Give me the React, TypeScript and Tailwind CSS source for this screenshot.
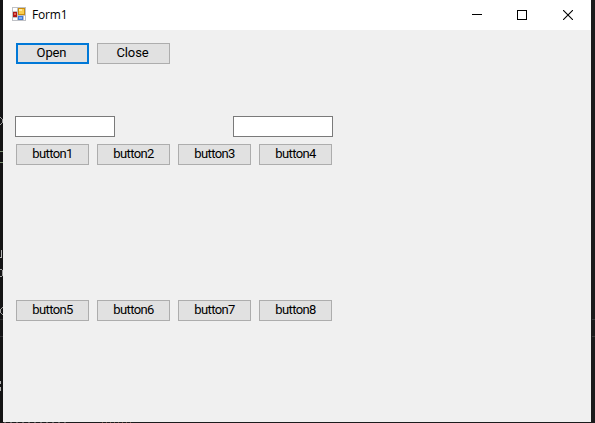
import React from "react";

function FormIcon() {
  return (
    <svg width="14" height="14" viewBox="0 0 14 14" shapeRendering="crispEdges">
      <rect x="0" y="0" width="14" height="14" fill="#bfc1c6" />
      <rect x="1" y="1" width="4" height="3" fill="#ffffff" />
      <rect x="1" y="11" width="4" height="2" fill="#ffffff" />
      <rect x="12" y="9" width="1" height="4" fill="#ffffff" />
      <rect x="1" y="5" width="4" height="5" fill="#b01818" />
      <rect x="2" y="6" width="2" height="2" fill="#e0665a" />
      <rect x="6" y="1" width="7" height="7" fill="#c98c10" />
      <rect x="7" y="2" width="5" height="5" fill="#f9cd4f" />
      <rect x="7" y="2" width="3" height="2" fill="#fee9a0" />
      <rect x="6" y="9" width="5" height="4" fill="#3f78d8" />
      <rect x="7" y="10" width="3" height="2" fill="#7fb0f5" />
    </svg>
  );
}

function TitleBar() {
  return (
    <header className="flex h-[30px] shrink-0 items-start bg-white">
      <div className="pt-[7px] pl-[9px]">
        <FormIcon />
      </div>
      <h1 className="grow pt-[7px] pl-[6px] font-['Open_Sans',sans-serif] text-[12px] leading-4 tracking-[-0.2px] text-black">
        Form1
      </h1>
      <button aria-label="Minimize" className="flex h-[29px] w-[46px] items-center justify-center pl-[2px]">
        <svg width="10" height="10" shapeRendering="crispEdges">
          <path d="M0 4.5H10" stroke="#000" />
        </svg>
      </button>
      <button aria-label="Maximize" className="flex h-[29px] w-[46px] items-center justify-center">
        <svg width="10" height="10" shapeRendering="crispEdges">
          <rect x="0.5" y="0.5" width="9" height="9" fill="none" stroke="#000" />
        </svg>
      </button>
      <button aria-label="Close" className="flex h-[29px] w-[46px] items-center justify-center">
        <svg width="10" height="10">
          <path d="M0 0L10 10M10 0L0 10" stroke="#000" strokeWidth="1.1" />
        </svg>
      </button>
    </header>
  );
}

interface ButtonSpec {
  label: string;
  focused?: boolean;
  wide?: boolean;
}

function FormButton({ label, focused = false, wide = false }: ButtonSpec) {
  return (
    <button
      className={
        "flex h-[21px] w-[73px] items-center justify-center bg-[#e1e1e1] pb-[2px] font-[Roboto,sans-serif] text-[13px] leading-none font-normal text-black " +
        (wide ? "pr-[2px] tracking-[-0.1px] " : "tracking-[-0.6px] ") +
        (focused ? "border-2 border-[#0078d7]" : "border border-[#adadad]")
      }
    >
      {label}
    </button>
  );
}

function ButtonRow({ buttons }: { buttons: ButtonSpec[] }) {
  return (
    <div className="flex gap-2 pl-[13px]">
      {buttons.map((button) => (
        <FormButton key={button.label} {...button} />
      ))}
    </div>
  );
}

function TextBox({ label }: { label: string }) {
  return (
    <input
      type="text"
      aria-label={label}
      className="h-[21px] w-[100px] border border-[#7a7a7a] bg-white px-1 text-[12px]"
    />
  );
}

/* Dark editor showing past the left edge of the window. */
function LeftBackdrop() {
  return (
    <svg width="3" height="423" className="shrink-0" shapeRendering="crispEdges">
      <rect width="3" height="423" fill="#141415" />
      <path d="M0 117.5H1M1 118.5H2M2.5 119V123M1 123.5H2M0 124.5H1" stroke="#9a9a9a" fill="none" />
      <path d="M0 151.5H3M0 162.5H3" stroke="#7d8f72" />
      <path d="M1.5 250V258M0 257.5H2" stroke="#b0b0b0" fill="none" />
      <path d="M0 269.5H2M2.5 270V276M0 276.5H2" stroke="#a0a0a0" fill="none" />
      <path d="M2 307.5H3M1 308.5H2M0.5 309V313M1 313.5H2M2 314.5H3" stroke="#a0a0a0" fill="none" />
      <path d="M0 319.5H3M0 336.5H3" stroke="#303032" />
      <path d="M0.5 381V384M0.5 387V391" stroke="#b0b0b0" />
    </svg>
  );
}

function RightBackdrop() {
  return (
    <svg width="4" height="423" className="shrink-0" shapeRendering="crispEdges">
      <rect width="4" height="423" fill="#1b1b1c" />
      <path d="M1 319.5H4M1 336.5H4" stroke="#3a3a3c" />
    </svg>
  );
}

function BottomEdge() {
  return (
    <svg width="588" height="1" className="shrink-0" shapeRendering="crispEdges">
      <rect width="588" height="1" fill="#1b1b1c" />
      <path d="M1 0.5H66" stroke="#585858" strokeDasharray="2 4" />
      <path d="M99 0.5H128" stroke="#6a5044" strokeDasharray="1 3" />
    </svg>
  );
}

export default function App() {
  return (
    <div className="flex h-[423px] w-[595px] overflow-hidden bg-[#1b1b1c]">
      <LeftBackdrop />
      <div className="flex w-[588px] flex-col">
        <main className="flex h-[422px] flex-col bg-[#f0f0f0]">
          <TitleBar />
          <div className="pt-[13px]">
            <ButtonRow buttons={[{ label: "Open", focused: true, wide: true }, { label: "Close", wide: true }]} />
          </div>
          <div className="mt-[52px] flex gap-[118px] pl-3">
            <TextBox label="First value" />
            <TextBox label="Second value" />
          </div>
          <div className="mt-[7px]">
            <ButtonRow buttons={[{ label: "button1" }, { label: "button2" }, { label: "button3" }, { label: "button4" }]} />
          </div>
          <div className="mt-[135px]">
            <ButtonRow buttons={[{ label: "button5" }, { label: "button6" }, { label: "button7" }, { label: "button8" }]} />
          </div>
        </main>
        <BottomEdge />
      </div>
      <RightBackdrop />
    </div>
  );
}
